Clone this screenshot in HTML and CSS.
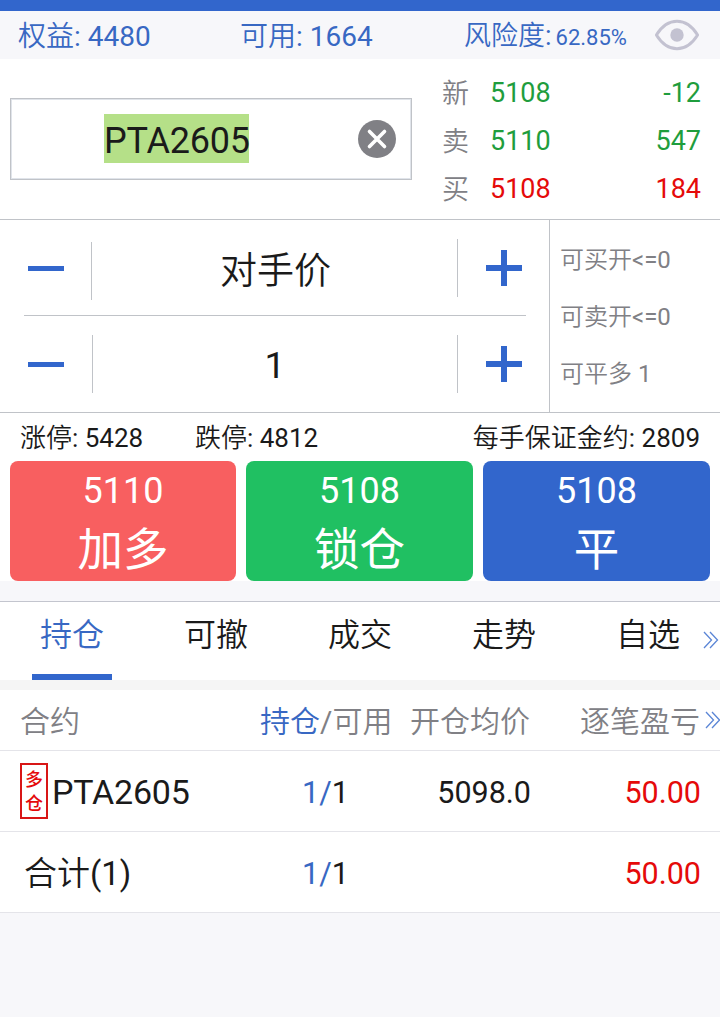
FILE: index.html
```html
<!DOCTYPE html>
<html lang="zh-CN">
<head>
<meta charset="utf-8">
<title>PTA2605</title>
<link rel="stylesheet" href="styles.css">
</head>
<body>
<div class="app">
  <div class="statusbar"></div>
  <header class="account">
    <span class="equity">权益: 4480</span>
    <span class="available">可用: 1664</span>
    <span class="risk">风险度:<small>62.85%</small></span>
    <svg class="eye" width="46" height="32" viewBox="0 0 46 32" fill="none">
      <path d="M2.400 16C8 7 15 2.300 23 2.300S38 7 43.600 16C38 25 31 29.700 23 29.700S8 25 2.400 16Z" stroke="#c3c2d1" stroke-width="3" stroke-linejoin="round"/>
      <circle cx="23" cy="16" r="6.700" fill="#c3c2d1"/>
    </svg>
  </header>

  <section class="contract">
    <div class="search">
      <span class="symbol">PTA2605</span>
      <svg class="clear" width="38" height="38" viewBox="0 0 38 38">
        <circle cx="19" cy="19" r="19" fill="#808085"/>
        <path d="M11.500 11.500L26.500 26.500M26.500 11.500L11.500 26.500" stroke="#fff" stroke-width="3.600" stroke-linecap="round"/>
      </svg>
    </div>
    <div class="quotes">
      <div class="quote down"><b>新</b><span>5108</span><span>-12</span></div>
      <div class="quote down"><b>卖</b><span>5110</span><span>547</span></div>
      <div class="quote up"><b>买</b><span>5108</span><span>184</span></div>
    </div>
  </section>

  <section class="order">
    <div class="steppers">
      <div class="stepper price">
        <i class="minus"></i>
        <span class="value">对手价</span>
        <i class="plus"></i>
      </div>
      <div class="stepper lots">
        <i class="minus"></i>
        <span class="value">1</span>
        <i class="plus"></i>
      </div>
    </div>
    <div class="limits">
      <span>可买开&lt;=0</span>
      <span>可卖开&lt;=0</span>
      <span>可平多 1</span>
    </div>
  </section>

  <section class="trade">
    <div class="info">
      <span class="limit-up">涨停: 5428</span>
      <span>跌停: 4812</span>
      <span class="margin">每手保证金约: 2809</span>
    </div>
    <div class="buttons">
      <div class="btn red"><span>5110</span><strong>加多</strong></div>
      <div class="btn green"><span>5108</span><strong>锁仓</strong></div>
      <div class="btn blue"><span>5108</span><strong>平</strong></div>
    </div>
  </section>

  <nav class="tabs">
    <span class="tab active">持仓</span>
    <span class="tab">可撤</span>
    <span class="tab">成交</span>
    <span class="tab">走势</span>
    <span class="tab">自选</span>
    <svg class="more tabs-more" width="16" height="18" viewBox="0 0 16 18"><path d="M1 1L8.500 9L1 17M7 1L14.500 9L7 17"/></svg>
  </nav>

  <section class="positions">
    <div class="row head">
      <span>合约</span>
      <span><em>持仓</em>/可用</span>
      <span>开仓均价</span>
      <span>逐笔盈亏</span>
      <svg class="more head-more" width="16" height="18" viewBox="0 0 16 18"><path d="M1 1L8.500 9L1 17M7 1L14.500 9L7 17"/></svg>
    </div>
    <div class="row">
      <span class="name"><span class="badge"><i>多</i><i>仓</i></span>PTA2605</span>
      <span class="qty"><em>1/</em>1</span>
      <span>5098.0</span>
      <span class="profit">50.00</span>
    </div>
    <div class="row">
      <span class="name total">合计(1)</span>
      <span class="qty"><em>1/</em>1</span>
      <span></span>
      <span class="profit">50.00</span>
    </div>
  </section>
</div>
</body>
</html>
```
FILE: styles.css
```css
* { box-sizing: border-box; }
body {
  margin: 0;
  background: #f7f7fa;
  color: #1a1a1a;
  font-family: Roboto, "Noto Sans CJK SC DemiLight", "Noto Sans CJK SC", sans-serif;
}
.app { width: 720px; height: 1017px; overflow: hidden; }
i, em { font-style: normal; }
svg { display: block; }

.statusbar { height: 11px; background: #3266cc; }

.account {
  display: grid;
  grid-template-columns: 222px 224px 189px 1fr;
  height: 48px;
  padding-left: 18px;
  line-height: 51px;
  font-size: 28px;
  color: #3868c3;
  white-space: nowrap;
}
.risk { font-size: 27px; }
.risk small { margin-left: 4px; font-size: 22px; }
.eye { margin: 8px 0 0 1px; }

.contract {
  display: flex;
  height: 160px;
  background: #fff;
}
.search {
  display: flex;
  align-items: center;
  justify-content: space-between;
  width: 402px;
  height: 82px;
  margin: 39px 30px 0 10px;
  padding: 0 15px 0 93px;
  border: 1px solid #c0c3c8;
  box-shadow: inset 0 0 0 1px #e0e4ea;
}
.symbol {
  height: 49px;
  width: 145px;
  margin-top: -2px;
  line-height: 54px;
  font-size: 36px;
  letter-spacing: -0.2px;
  white-space: nowrap;
  background: #b5e088;
}
.quotes { width: 259px; padding-top: 9px; }
.quote {
  display: grid;
  grid-template-columns: 48px 100px 1fr;
  height: 48px;
  line-height: 50px;
  font-size: 27px;
}
.quote span:last-child { text-align: right; }
.quote b { padding-top: 1px; font-weight: 350; color: #808085; }
.down { color: #1f9d3d; }
.up { color: #e50a0a; }

.order {
  display: flex;
  height: 194px;
  background: #fff;
  border-top: 1px solid #c0c3c8;
  border-bottom: 1px solid #c0c3c8;
}
.steppers { width: 550px; padding: 0 23px 0 24px; border-right: 1px solid #c0c3c8; }
.stepper {
  display: grid;
  grid-template-columns: 68px 366px 1fr;
  height: 96px;
}
.lots { grid-template-columns: 69px 365px 1fr; }
.price { border-bottom: 1px solid #c0c3c8; }
.value {
  height: 58px;
  margin-top: 19px;
  line-height: 62px;
  font-size: 37px;
  text-align: center;
  border-right: 1px solid #c0c3c8;
}
.price .value { padding-left: 2px; line-height: 65px; font-weight: 350; }
.minus {
  height: 58px;
  margin-top: 22px;
  background: linear-gradient(#3266cc, #3266cc) 4px 24px / 36px 5px no-repeat;
  border-right: 1px solid #c0c3c8;
}
.lots .minus { margin-top: 19px; background-position: 4px 27px; }
.plus {
  width: 36px;
  height: 36px;
  margin: 30px 0 0 28px;
  background:
    linear-gradient(#3266cc, #3266cc) 0 15px / 36px 6px no-repeat,
    linear-gradient(#3266cc, #3266cc) 15px 0 / 6px 36px no-repeat;
}
.limits {
  display: flex;
  flex-direction: column;
  padding: 12px 0 0 10px;
  line-height: 57px;
  font-size: 24px;
  color: #808085;
}

.trade { height: 168px; background: #fff; }
.info {
  display: flex;
  height: 48px;
  padding: 0 20px;
  line-height: 51px;
  font-size: 26px;
}
.limit-up { width: 175px; }
.margin { margin-left: auto; }
.buttons {
  display: grid;
  grid-template-columns: 226px 227px 227px;
  gap: 10px;
  padding: 0 10px;
}
.btn {
  display: flex;
  flex-direction: column;
  align-items: center;
  height: 120px;
  border-radius: 8px;
  color: #fff;
}
.btn span { height: 56px; line-height: 60px; font-size: 36px; }
.btn strong {
  height: 60px;
  line-height: 59px;
  font-family: "Noto Sans CJK SC", sans-serif;
  font-size: 45.500px;
  font-weight: 400;
}
.red { background: #f85f60; }
.green { background: #20c062; }
.blue { background: #3266cc; }

.tabs {
  position: relative;
  display: grid;
  grid-template-columns: repeat(5, 144px);
  justify-items: center;
  height: 79px;
  margin-top: 20px;
  border-top: 1px solid #c3c5ce;
  background: #fff;
}
.tab {
  width: 80px;
  height: 78px;
  line-height: 67px;
  font-size: 32px;
  font-weight: 350;
  text-align: center;
}
.active { color: #3868c3; border-bottom: 6px solid #3266cc; }
.more { position: absolute; fill: none; stroke: #5b86d6; stroke-width: 1.300; }
.tabs-more { left: 703px; top: 29px; }
.head-more { left: 705px; top: 21px; }

.positions { border-top: 10px solid #f5f5f5; }
.row {
  position: relative;
  display: grid;
  grid-template-columns: 230px 152px 129px 170px;
  height: 81px;
  padding-left: 20px;
  line-height: 83px;
  font-size: 30.500px;
  background: #fff;
  border-bottom: 1px solid #e4e4e9;
  text-align: right;
  white-space: nowrap;
}
.row em { color: #3868c3; }
.row > span:first-child { text-align: left; }
.head {
  grid-template-columns: 240px 132px 138px 170px;
  height: 61px;
  line-height: 64px;
  font-size: 30px;
  color: #808085;
}
.qty { padding-right: 53px; }
.profit { color: #e50a0a; }
.name { display: flex; font-size: 34px; letter-spacing: -0.2px; }
.total { padding-left: 4px; font-size: 33px; letter-spacing: 0; }
.badge {
  display: flex;
  flex-direction: column;
  align-items: center;
  width: 28px;
  height: 56px;
  margin: 12px 4px 0 0;
  padding-top: 1px;
  border: 2px solid #d81616;
  line-height: 24px;
  font-family: "Noto Sans CJK SC", sans-serif;
  font-size: 18px;
  font-weight: 500;
  color: #e50a0a;
}
```
